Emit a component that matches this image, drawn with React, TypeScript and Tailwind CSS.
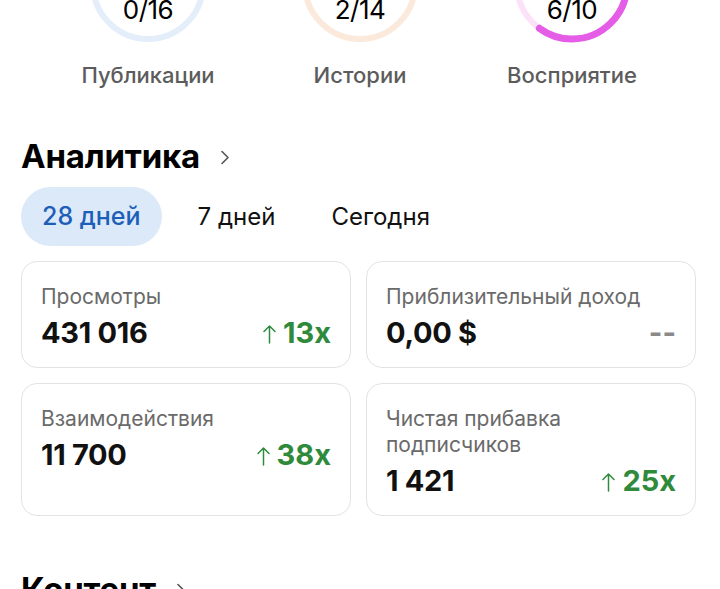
import React from "react";

const R = 55;
const C = 2 * Math.PI * R;

function Ring({ track, color, progress, num, label }: { track: string; color: string; progress: number; num: string; label: string }) {
  return (
    <div className="flex flex-col items-center">
      <div className="relative h-[48px] w-full flex justify-center">
        <svg className="absolute top-[-76px] left-1/2 -translate-x-1/2" width="120" height="120" viewBox="0 0 120 120">
          <circle cx="60" cy="60" r={R} fill="none" stroke={track} strokeWidth="6" />
          {progress > 0 && (
            <circle
              cx="60"
              cy="60"
              r={R}
              fill="none"
              stroke={color}
              strokeWidth="7"
              strokeLinecap="round"
              strokeDasharray={`${C * progress} ${C}`}
              transform="rotate(-90 60 60)"
            />
          )}
        </svg>
        <span className="relative mt-[-4px] text-[26px] leading-[28px] text-black tracking-[-0.5px]">{num}</span>
      </div>
      <div className="mt-[13px] text-[22px] leading-[28px] text-[#5c5c5c] font-medium">{label}</div>
    </div>
  );
}

function Chevron({ className }: { className?: string }) {
  return (
    <svg className={className} width="10" height="15" viewBox="0 0 10 15" fill="none">
      <path d="M2 1.5 L8 7.5 L2 13.5" stroke="#555" strokeWidth="1.6" strokeLinecap="round" strokeLinejoin="round" />
    </svg>
  );
}

function Up() {
  return (
    <svg width="13" height="20" viewBox="0 0 13 20" fill="none" className="mr-[7px] mt-[1px]">
      <path d="M6.5 19 V2 M1 7.5 L6.5 2 L12 7.5" stroke="#2f8a3c" strokeWidth="1.5" strokeLinecap="round" strokeLinejoin="round" />
    </svg>
  );
}

function Card({ label, value, delta }: { label: React.ReactNode; value: string; delta?: string }) {
  return (
    <div className="rounded-[16px] border border-[#e3e3e3] bg-white px-[19px] pt-[22px] pb-[17px]">
      <div className="text-[21px] leading-[26px] text-[#6a6a6a]">{label}</div>
      <div className="mt-[6px] flex items-center justify-between">
        <span className="text-[29px] leading-[34px] font-bold text-[#111] tracking-[-0.3px]">{value}</span>
        {delta ? (
          <span className="flex items-center text-[29px] leading-[34px] font-bold text-[#2f8a3c]">
            <Up />
            {delta}
          </span>
        ) : (
          <span className="text-[29px] leading-[34px] font-bold text-[#8a8a8a]">--</span>
        )}
      </div>
    </div>
  );
}

export default function App() {
  return (
    <div className="w-[720px] h-[589px] overflow-hidden bg-white" style={{ fontFamily: "Inter, 'Noto Sans', sans-serif" }}>
      <div className="grid grid-cols-3 px-[42px]">
        <Ring track="#e4eefb" color="#e4eefb" progress={0} num="0/16" label="Публикации" />
        <Ring track="#fbe9dc" color="#fbe9dc" progress={0} num="2/14" label="Истории" />
        <Ring track="#fbe2f8" color="#e55ce6" progress={0.6} num="6/10" label="Восприятие" />
      </div>

      <div className="px-[21px]">
        <div className="mt-[47px] flex items-center">
          <h2 className="text-[33px] leading-[40px] font-bold text-black tracking-[-0.2px]">Аналитика</h2>
          <Chevron className="ml-[20px] mt-[2px]" />
        </div>

        <div className="mt-[11px] flex items-center gap-[16px]">
          <div className="h-[59px] flex items-center rounded-full bg-[#dce9f9] px-[21px] text-[25px] font-medium text-[#1d5fb8]">28 дней</div>
          <div className="h-[59px] flex items-center px-[20px] text-[24px] text-[#111]">7 дней</div>
          <div className="h-[59px] flex items-center px-[20px] text-[24px] text-[#111]">Сегодня</div>
        </div>

        <div className="mt-[15px] grid grid-cols-2 gap-[15px] pr-[3px]">
          <Card label="Просмотры" value="431 016" delta="13x" />
          <Card label="Приблизительный доход" value="0,00 $" />
          <Card label="Взаимодействия" value="11 700" delta="38x" />
          <Card label={<>Чистая прибавка<br />подписчиков</>} value="1 421" delta="25x" />
        </div>

        <div className="mt-[53px] flex items-center">
          <h2 className="text-[33px] leading-[40px] font-bold text-black tracking-[-0.2px]">Контент</h2>
          <Chevron className="ml-[20px] mt-[2px]" />
        </div>
      </div>
    </div>
  );
}
